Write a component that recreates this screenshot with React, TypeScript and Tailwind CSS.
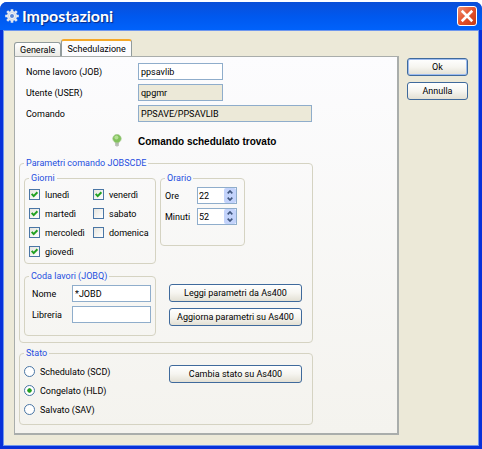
import { useId, useState, type ReactNode } from "react";
import { clsx } from "clsx";

const DAYS = ["lunedì", "martedì", "mercoledì", "giovedì", "venerdì", "sabato", "domenica"];

const STATES = ["Schedulato (SCD)", "Congelato (HLD)", "Salvato (SAV)"];

const GearIcon = () => (
  <svg viewBox="0 0 16 16" className="size-4 shrink-0">
    <g stroke="#dfe5f0" strokeWidth="2.6">
      <path d="M8 1.2v13.6M1.2 8h13.6M3.2 3.2l9.6 9.6M12.8 3.2l-9.6 9.6" />
    </g>
    <circle cx="8" cy="8" r="5" fill="#e4e9f2" />
    <circle cx="8" cy="8" r="3.4" fill="#f8fafd" stroke="#b4c0d6" strokeWidth="0.6" />
    <circle cx="8" cy="8" r="2" fill="#5b86d6" />
  </svg>
);

const BulbIcon = () => (
  <svg viewBox="0 0 10 13" className="h-[13px] w-2.5">
    <path d="M3.2 8h3.6v3.2L5.8 12.4H4.2L3.2 11.2z" fill="#c4c7c1" />
    <path d="M3.2 9.6h3.6M3.2 11h3.6" stroke="#a2a69f" strokeWidth="0.5" />
    <circle cx="5" cy="4.6" r="4.2" fill="#82c25c" stroke="#a3c98c" strokeWidth="0.7" />
    <circle cx="4.4" cy="3.6" r="2" fill="#b4df94" />
  </svg>
);

const XpButton = ({
  children,
  primary,
}: {
  children: ReactNode;
  primary?: boolean;
}) => (
  <button
    type="button"
    className={clsx(
      "h-[18px] w-full rounded-[3px] border border-[#3f6a9c] bg-linear-to-b from-white via-[#f6f5f0] to-[#e3e0d4] text-center leading-4",
      primary && "inset-ring inset-ring-[#9dbcf0]",
    )}>
    {children}
  </button>
);

const Group = ({
  label,
  children,
  className,
}: {
  label: string;
  children: ReactNode;
  className?: string;
}) => (
  <fieldset className={clsx("min-w-0 rounded-[4px] border border-[#d5d3c2] px-1", className)}>
    <legend className="px-0.5 leading-3 text-[#1f4fe0]">{label}</legend>
    {children}
  </fieldset>
);

const TextField = ({
  label,
  value,
  readOnly,
  labelClass,
  inputClass,
}: {
  label: string;
  value: string;
  readOnly?: boolean;
  labelClass: string;
  inputClass: string;
}) => {
  const id = useId();
  return (
    <div className="flex items-center">
      <label htmlFor={id} className={labelClass}>
        {label}
      </label>
      <input
        id={id}
        type="text"
        defaultValue={value}
        readOnly={readOnly}
        className={clsx(
          "h-[17px] border border-[#8fadcb] px-0.5 outline-none",
          readOnly ? "bg-[#ece9d8]" : "bg-white",
          inputClass,
        )}
      />
    </div>
  );
};

const SpinField = ({ label, initial, max }: { label: string; initial: number; max: number }) => {
  const id = useId();
  const [value, setValue] = useState(initial);

  const step = (delta: number) => setValue((v) => Math.min(max, Math.max(0, v + delta)));

  return (
    <div className="flex items-center">
      <label htmlFor={id} className="w-8">
        {label}
      </label>
      <div className="flex h-[17px] w-10 border border-[#8fadcb] bg-white">
        <input
          id={id}
          type="text"
          inputMode="numeric"
          value={value}
          onChange={(e) => setValue(Number(e.target.value) || 0)}
          className="min-w-0 flex-1 px-px outline-none"
        />
        <div className="flex w-3 flex-col rounded-[2px] bg-[#c3d3fb]">
          <button
            type="button"
            aria-label={`${label} +`}
            onClick={() => step(1)}
            className="flex flex-1 items-center justify-center">
            <svg viewBox="0 0 6 4" className="h-1 w-1.5">
              <path d="M0.7 3.3L3 1l2.3 2.3" fill="none" stroke="#40567f" strokeWidth="1.7" />
            </svg>
          </button>
          <button
            type="button"
            aria-label={`${label} -`}
            onClick={() => step(-1)}
            className="flex flex-1 items-center justify-center">
            <svg viewBox="0 0 6 4" className="h-1 w-1.5">
              <path d="M0.7 0.7L3 3l2.3-2.3" fill="none" stroke="#40567f" strokeWidth="1.7" />
            </svg>
          </button>
        </div>
      </div>
    </div>
  );
};

const DayCheck = ({ label, initial }: { label: string; initial: boolean }) => {
  const [checked, setChecked] = useState(initial);
  return (
    <label className="flex h-[19px] items-center gap-[5px]">
      <span className="grid size-[11px]">
        <input
          type="checkbox"
          checked={checked}
          onChange={() => setChecked(!checked)}
          className="col-start-1 row-start-1 size-[11px] appearance-none border border-[#4a76a5] bg-linear-to-br from-[#e6e5df] to-white"
        />
        {checked && (
          <svg viewBox="0 0 11 11" className="pointer-events-none col-start-1 row-start-1 size-[11px]">
            <path d="M2.7 4.8l2 2.3L8.4 3.2" fill="none" stroke="#21a121" strokeWidth="2" />
          </svg>
        )}
      </span>
      {label}
    </label>
  );
};

export default function App() {
  const [tab, setTab] = useState("Schedulazione");
  const [state, setState] = useState(STATES[1]);

  return (
    <div className="flex min-h-screen flex-col bg-white pt-0.5 font-[Roboto,Arial,sans-serif] text-[9px] leading-3 text-black">
      <div className="flex flex-1 flex-col rounded-t-[7px] bg-[#0831d9]">
        <header className="flex h-7 items-center gap-0.5 rounded-t-[7px] bg-linear-to-b from-[#0a4fd8] via-[#0058ee] to-[#0062fb] pr-[5px] pl-1">
          <GearIcon />
          <h1 className="flex-1 font-[Lato,sans-serif] text-[16px] leading-5 font-bold text-white text-shadow-[1px_1px_1px_#0a2a80]">
            Impostazioni
          </h1>
          <button
            type="button"
            aria-label="Chiudi"
            className="flex size-5 items-center justify-center rounded-[3px] border border-white bg-linear-to-br from-[#f0906f] via-[#e2512c] to-[#c63a12]">
            <svg viewBox="0 0 12 12" className="size-3.5">
              <path d="M1.5 1.5l9 9M10.5 1.5l-9 9" stroke="#fff" strokeWidth="2.2" />
            </svg>
          </button>
        </header>

        <main className="mx-[3px] mb-[3px] flex flex-1 items-start border border-[#6f97ee] bg-[#ece9d8] pt-2 pr-2.5 pb-2.5 pl-2.5">
          <div className="flex min-w-0 flex-1 flex-col self-stretch">
            <div role="tablist" className="flex items-end">
              {["Generale", "Schedulazione"].map((name) => (
                <button
                  key={name}
                  type="button"
                  role="tab"
                  aria-selected={tab === name}
                  onClick={() => setTab(name)}
                  className={clsx(
                    "rounded-t-[3px] border border-b-0 border-[#919b9c] px-[5px]",
                    tab === name
                      ? "h-[17px] border-t-2 border-t-[#f5a828] bg-[#fcfcfe]"
                      : "h-[14px] bg-linear-to-b from-white to-[#ecebe6]",
                  )}>
                  {name}
                </button>
              ))}
            </div>

            <div
              role="tabpanel"
              className="flex-1 border border-r-2 border-b-2 border-[#a9adab] bg-linear-to-b from-[#fcfcfe] to-[#f4f3ee] pt-1.5 pl-1">
              <div className="flex flex-col gap-1 pl-[7px]">
                <TextField label="Nome lavoro (JOB)" value="ppsavlib" labelClass="w-28" inputClass="w-[85px]" />
                <TextField label="Utente (USER)" value="qpgmr" readOnly labelClass="w-28" inputClass="w-[85px]" />
                <TextField label="Comando" value="PPSAVE/PPSAVLIB" readOnly labelClass="w-28" inputClass="w-[174px]" />
              </div>

              <div className="flex items-center gap-4 pt-2.5 pl-[93px]">
                <BulbIcon />
                <strong className="pt-1 font-['Liberation_Sans',Arial,sans-serif] text-[10px]">
                  Comando schedulato trovato
                </strong>
              </div>

              <Group label="Parametri comando JOBSCDE" className="mt-[9px] w-[294px] pb-1.5">
                <div className="grid grid-cols-[132px_1fr] items-start gap-x-1 gap-y-1.5 pt-[3px]">
                  <Group label="Giorni" className="pb-0.5">
                    <div className="grid grid-flow-col grid-cols-[64px_1fr] grid-rows-4 pt-px">
                      {DAYS.map((day, i) => (
                        <DayCheck key={day} label={day} initial={i < 5} />
                      ))}
                    </div>
                  </Group>

                  <Group label="Orario" className="w-[85px] pb-5">
                    <div className="flex flex-col gap-1 pt-[3px]">
                      <SpinField label="Ore" initial={22} max={23} />
                      <SpinField label="Minuti" initial={52} max={59} />
                    </div>
                  </Group>

                  <Group label="Coda lavori (JOBQ)" className="pb-3">
                    <div className="flex flex-col gap-1 pt-[3px] pl-[3px]">
                      <TextField label="Nome" value="*JOBD" labelClass="w-10" inputClass="w-[79px]" />
                      <TextField label="Libreria" value="" labelClass="w-10" inputClass="w-[79px]" />
                    </div>
                  </Group>

                  <div className="flex w-[142px] flex-col gap-1.5 pt-3.5 pl-[9px]">
                    <XpButton>Leggi parametri da As400</XpButton>
                    <XpButton>Aggiorna parametri su As400</XpButton>
                  </div>
                </div>
              </Group>

              <Group label="Stato" className="mt-1 w-[294px] pb-[5px]">
                <div className="flex items-start justify-between pt-[3px] pr-1.5">
                  <div role="radiogroup" aria-label="Stato">
                    {STATES.map((name) => (
                      <label key={name} className="flex h-[19px] items-center gap-[5px]">
                        <input
                          type="radio"
                          name="stato"
                          checked={state === name}
                          onChange={() => setState(name)}
                          className="size-[11px] appearance-none rounded-full border border-[#4a76a5] bg-white checked:bg-radial checked:from-[#21a121] checked:from-30% checked:to-white checked:to-40%"
                        />
                        {name}
                      </label>
                    ))}
                  </div>
                  <div className="w-[133px] pt-[3px]">
                    <XpButton>Cambia stato su As400</XpButton>
                  </div>
                </div>
              </Group>
            </div>
          </div>

          <div className="ml-2 flex w-[61px] flex-col gap-1.5 pt-[19px]">
            <XpButton primary>Ok</XpButton>
            <XpButton>Annulla</XpButton>
          </div>
        </main>
      </div>
    </div>
  );
}
